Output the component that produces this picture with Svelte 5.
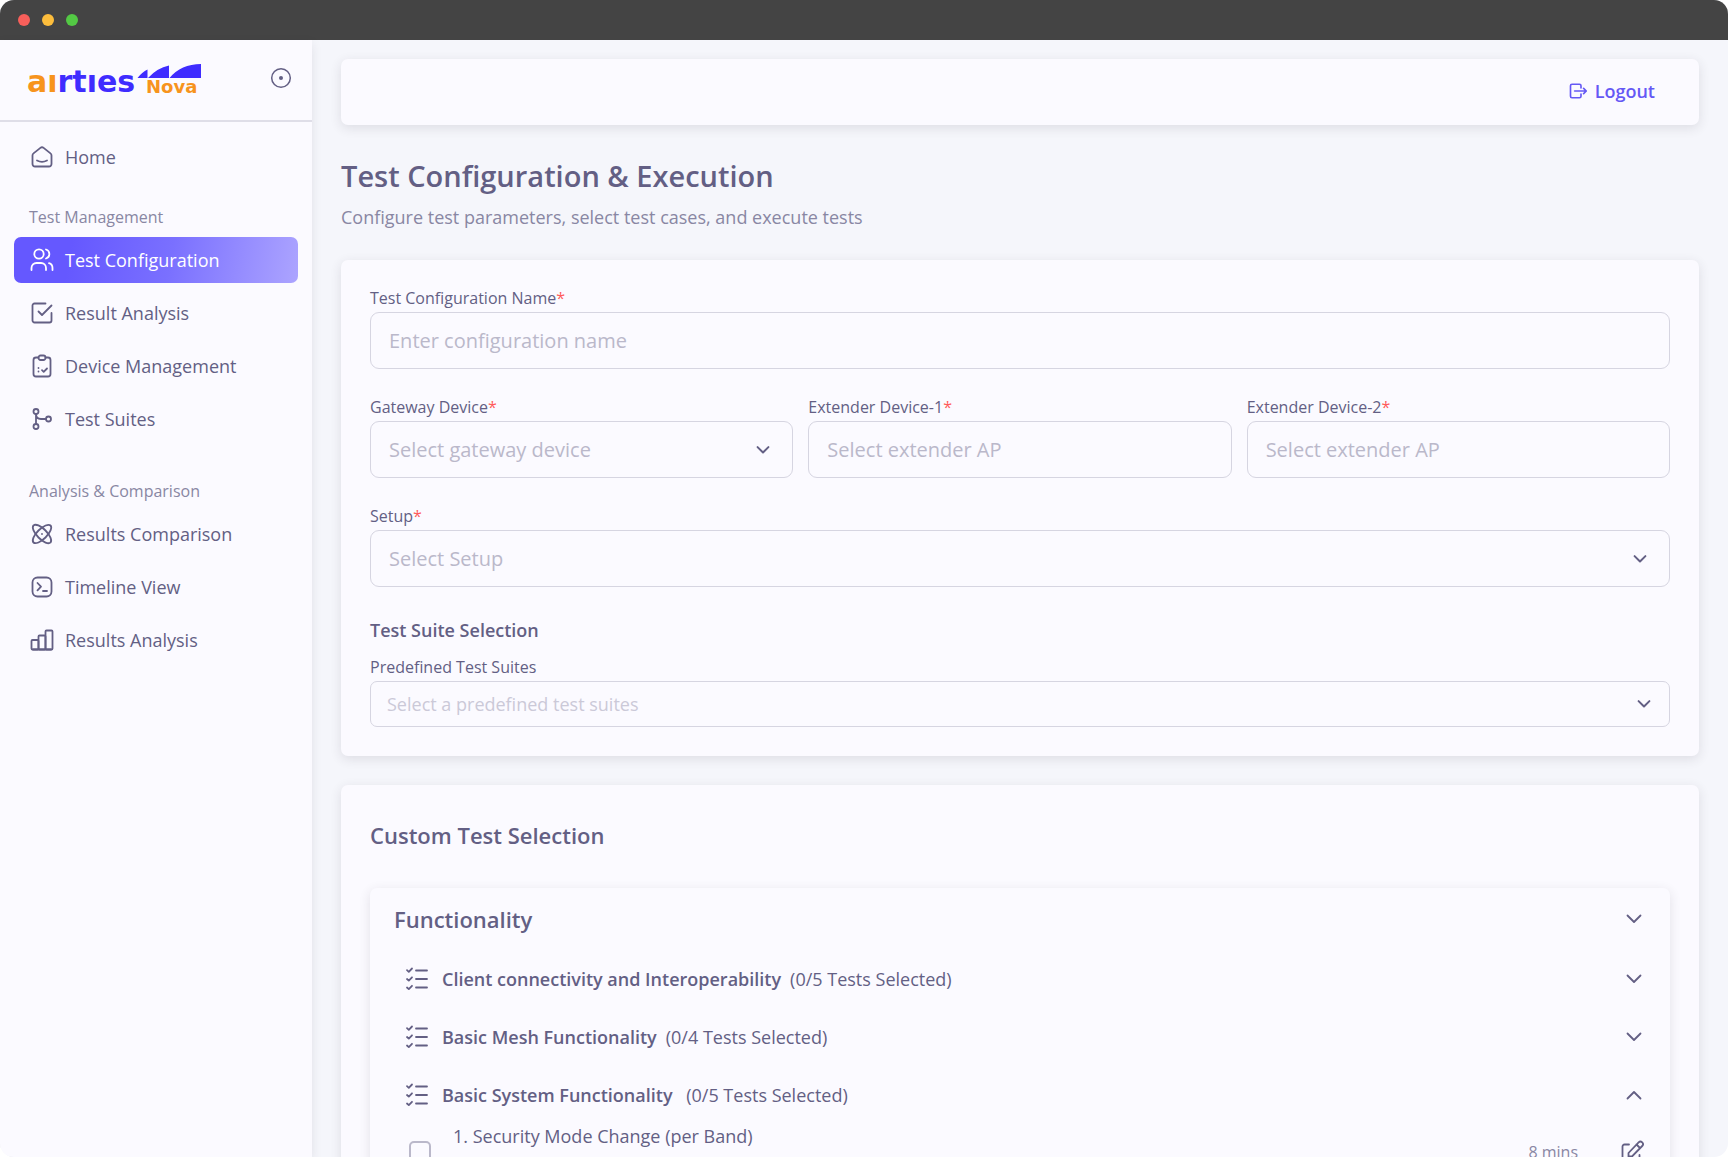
<script lang="ts">
  type Item = { label: string; icon: string; active?: boolean }
  type Group = { title: string; items: Item[] }

  const groups: Group[] = [
    {
      title: 'Test Management',
      items: [
        { label: 'Test Configuration', icon: 'users', active: true },
        { label: 'Result Analysis', icon: 'checkbox' },
        { label: 'Device Management', icon: 'clipboard' },
        { label: 'Test Suites', icon: 'branch' },
      ],
    },
    {
      title: 'Analysis & Comparison',
      items: [
        { label: 'Results Comparison', icon: 'atom' },
        { label: 'Timeline View', icon: 'terminal' },
        { label: 'Results Analysis', icon: 'bars' },
      ],
    },
  ]

  let suites = $state([
    { name: 'Client connectivity and Interoperability', total: 5, open: false, tests: [] },
    { name: 'Basic Mesh Functionality', total: 4, open: false, tests: [] },
    {
      name: 'Basic System Functionality\u00a0',
      total: 5,
      open: true,
      tests: [{ name: 'Security Mode Change (per Band)', time: '8 mins', checked: false }],
    },
  ])

  const selected = (tests: { checked: boolean }[]) =>
    tests.filter((test) => test.checked).length
</script>

{#snippet icon(name: string)}
  <svg class="icon" viewBox="0 0 24 24" aria-hidden="true">
    {#if name === 'home'}
      <path d="M2.500 10.400a2.500 2.500 0 0 1 1-2L10.400 2.900a2.500 2.500 0 0 1 3.200 0L20.500 8.400a2.500 2.500 0 0 1 1 2V19a2.500 2.500 0 0 1-2.500 2.500H5A2.500 2.500 0 0 1 2.500 19z" />
      <path d="M7 15.500c3 1.600 7 1.600 10 0" />
    {:else if name === 'users'}
      <circle cx="9" cy="6" r="4.700" />
      <path d="M1.500 22v-2a5 5 0 0 1 5-5h4.500a5 5 0 0 1 5 5v2M16 1.500a4.700 4.700 0 0 1 0 9M22.500 22v-2a5 5 0 0 0-3.500-4.800" />
    {:else if name === 'checkbox'}
      <path d="M8.500 10.500l3.500 3.500L21.500 4.500" />
      <path d="M21.500 12v7.500a2 2 0 0 1-2 2h-15a2 2 0 0 1-2-2v-15a2 2 0 0 1 2-2H15.500" />
    {:else if name === 'clipboard'}
      <path d="M8.500 3.500h-2.500a2.500 2.500 0 0 0-2.500 2.500v14a2.500 2.500 0 0 0 2.500 2.500h12a2.500 2.500 0 0 0 2.500-2.500v-14a2.500 2.500 0 0 0-2.500-2.500h-2.500" />
      <rect x="8.500" y="1.500" width="7" height="4.500" rx="2" />
      <path d="M8.500 14v.010M8.500 17.500v.010M12 16.200l1.700 1.600 3.300-3.300" />
    {:else if name === 'branch'}
      <circle cx="6" cy="4.500" r="2.500" />
      <circle cx="6" cy="19.500" r="2.500" />
      <circle cx="18.500" cy="12" r="2.500" />
      <path d="M6 7v10M6 7c0 3.500 1.500 5 5 5h5" />
    {:else if name === 'atom'}
      <path d="M12 12v.010M20.500 3.500c-1.900-1.900-7.200.300-12 5s-7 10.100-5 12c1.900 1.900 7.200-.300 12-5s7-10.100 5-12" />
      <path d="M3.500 3.500c-1.900 1.900.300 7.200 5 12s10.100 7 12 5c1.900-1.900-.300-7.200-5-12s-10.100-7-12-5" />
    {:else if name === 'terminal'}
      <rect x="2.500" y="2.500" width="19" height="19" rx="5" />
      <path d="M7.500 8l3.500 3.700-3.500 3.700M13 16h4" />
    {:else if name === 'bars'}
      <rect x="1.500" y="12" width="7" height="9.500" rx="1" />
      <rect x="8.500" y="7.500" width="7" height="14" rx="1" />
      <rect x="15.500" y="2.500" width="7" height="19" rx="1" />
      <path d="M3 21.500h18" />
    {:else if name === 'checklist'}
      <path d="M11 3.500H22M11 12H22M11 20.500H22M2 3.200l1.800 1.600L7 1.500M2 12l1.800 1.600L7 10.300M2 20.500l1.800 1.600L7 18.800" />
    {:else if name === 'edit'}
      <path d="M9 4.500H4.500a2 2 0 0 0-2 2v13a2 2 0 0 0 2 2h13a2 2 0 0 0 2-2V15" />
      <path d="M8.500 16.500h3.500L22.200 6a2.500 2.500 0 0 0-3.600-3.600L8.500 13zM16.500 4.500l3.500 3.500" />
    {:else if name === 'logout'}
      <path d="M16 8V5a2 2 0 0 0-2-2H4a2 2 0 0 0-2 2v14a2 2 0 0 0 2 2H14a2 2 0 0 0 2-2v-3M7.500 12H23M19.500 8.500L23 12l-3.500 3.500" />
    {:else if name === 'down'}
      <path d="M5.500 8.500l6.500 6.500 6.500-6.500" />
    {:else if name === 'up'}
      <path d="M5.500 15.500l6.500-6.500 6.500 6.500" />
    {/if}
  </svg>
{/snippet}

<div class="window">
  <div class="titlebar">
    <span class="dot red"></span>
    <span class="dot yellow"></span>
    <span class="dot green"></span>
  </div>

  <div class="shell">
    <aside>
      <div class="brand">
        <svg class="logo" width="176" height="38" viewBox="0 0 176 38">
          <text class="name" x="-2" y="33"><tspan class="orange">aı</tspan>rtıes</text>
          <text class="nova" x="117" y="34">Nova</text>
          <path d="M108.500 19Q113 13 118.500 10.500V19zM119 19Q128 9 140 6.500V19zM140.500 19Q152 5 172 5V19z" />
        </svg>
        <button class="pin" aria-label="Toggle sidebar">
          <svg viewBox="0 0 22 22">
            <circle cx="11" cy="11" r="9.300" />
            <circle class="core" cx="11" cy="11" r="2" />
          </svg>
        </button>
      </div>

      <nav>
        <a href="#home">{@render icon('home')}Home</a>
        {#each groups as group}
          <h2>{group.title}</h2>
          {#each group.items as item}
            <a href="#{item.icon}" class:active={item.active}>
              {@render icon(item.icon)}{item.label}
            </a>
          {/each}
        {/each}
      </nav>
    </aside>

    <main>
      <header class="card topbar">
        <button class="logout">{@render icon('logout')}Logout</button>
      </header>

      <h1>Test Configuration &amp; Execution</h1>
      <p class="subtitle">Configure test parameters, select test cases, and execute tests</p>

      <form class="card config">
        <div class="field">
          <label for="name">Test Configuration Name<b>*</b></label>
          <input id="name" type="text" placeholder="Enter configuration name" />
        </div>
        <div class="columns">
          <div class="field">
            <label for="gateway">Gateway Device<b>*</b></label>
            <div class="select">
              <select id="gateway"><option>Select gateway device</option></select>
              {@render icon('down')}
            </div>
          </div>
          <div class="field">
            <label for="ext1">Extender Device-1<b>*</b></label>
            <input id="ext1" type="text" placeholder="Select extender AP" />
          </div>
          <div class="field">
            <label for="ext2">Extender Device-2<b>*</b></label>
            <input id="ext2" type="text" placeholder="Select extender AP" />
          </div>
        </div>
        <div class="field">
          <label for="setup">Setup<b>*</b></label>
          <div class="select">
            <select id="setup"><option>Select Setup</option></select>
            {@render icon('down')}
          </div>
        </div>
        <div class="predefined">
          <h3>Test Suite Selection</h3>
          <div class="field small">
            <label for="suite">Predefined Test Suites</label>
            <div class="select">
              <select id="suite"><option>Select a predefined test suites</option></select>
              {@render icon('down')}
            </div>
          </div>
        </div>
      </form>

      <section class="card custom">
        <h2>Custom Test Selection</h2>
        <div class="card panel">
          <button class="row heading">
            <span class="title">Functionality</span>
            {@render icon('down')}
          </button>
          {#each suites as suite}
            <button class="row" onclick={() => (suite.open = !suite.open)}>
              {@render icon('checklist')}
              <strong>{suite.name}</strong>
              <span class="count">({selected(suite.tests)}/{suite.total} Tests Selected)</span>
              {@render icon(suite.open ? 'up' : 'down')}
            </button>
            {#if suite.open}
              {#each suite.tests as test, i}
                <div class="test">
                  <input id="test-{i}" type="checkbox" bind:checked={test.checked} />
                  <label for="test-{i}">{i + 1}. {test.name}</label>
                  <span class="time">{test.time}</span>
                  <button class="edit" aria-label="Edit test">{@render icon('edit')}</button>
                </div>
              {/each}
            {/if}
          {/each}
        </div>
      </section>
    </main>
  </div>
</div>

<style>
  :global(body) {
    margin: 0;
    background: #fff;
  }

  .window {
    --text: #635f84;
    --muted: #8987a3;
    --line: #d6d5e1;
    --paper: #fbfaff;
    display: flex;
    flex-direction: column;
    height: 100vh;
    overflow: hidden;
    border-radius: 14px;
    background: #f5f6fb;
    color: var(--text);
    font: 18px/24px 'Open Sans', sans-serif;
  }

  .window * {
    box-sizing: border-box;
  }

  h1,
  h2,
  h3,
  p {
    margin: 0;
  }

  button {
    padding: 0;
    border: 0;
    background: none;
    color: inherit;
    font: inherit;
    cursor: pointer;
  }

  svg {
    display: block;
    flex: none;
  }

  .icon {
    width: 24px;
    height: 24px;
    fill: none;
    stroke: currentColor;
    stroke-width: 1.8;
    stroke-linecap: round;
    stroke-linejoin: round;
  }

  .titlebar {
    display: flex;
    flex: none;
    align-items: center;
    gap: 12px;
    height: 40px;
    padding-left: 18px;
    background: #444;
  }

  .dot {
    width: 12px;
    height: 12px;
    border-radius: 50%;
  }

  .red {
    background: #f75f5a;
  }

  .yellow {
    background: #fcbd3c;
  }

  .green {
    background: #53c944;
  }

  .shell {
    display: flex;
    flex: 1;
    min-height: 0;
  }

  aside {
    z-index: 1;
    flex: none;
    width: 312px;
    background: var(--paper);
    box-shadow: 0 4px 10px rgba(47, 43, 61, 0.1);
  }

  .brand {
    display: flex;
    align-items: center;
    justify-content: space-between;
    height: 82px;
    padding: 0 20px 4px 29px;
    border-bottom: 2px solid #dfdee8;
  }

  .logo {
    overflow: visible;
    fill: #3f2cff;
    font-family: 'DejaVu Sans', sans-serif;
    font-weight: 700;
  }

  .name {
    font-size: 30px;
  }

  .nova {
    fill: #f7941d;
    font-size: 18px;
  }

  .orange {
    fill: #f7941d;
  }

  .pin svg {
    width: 22px;
    height: 22px;
    fill: none;
    stroke: var(--text);
    stroke-width: 1.5;
  }

  .pin .core {
    fill: var(--text);
    stroke: none;
  }

  nav {
    display: flex;
    flex-direction: column;
    gap: 7px;
    padding: 12px 14px;
  }

  nav a {
    display: flex;
    align-items: center;
    gap: 11px;
    height: 46px;
    padding: 0 16px;
    border-radius: 7px;
    color: inherit;
    text-decoration: none;
  }

  nav a.active {
    background: linear-gradient(100deg, #6558ff 20%, #7a70ff 55%, #aca4ff);
    color: #fff;
  }

  nav h2 {
    margin-top: 29px;
    padding-left: 15px;
    color: var(--muted);
    font-size: 16px;
    font-weight: 400;
    line-height: 26px;
  }

  nav a:first-child + h2 {
    margin-top: 17px;
  }

  main {
    flex: 1;
    min-width: 0;
    padding: 19px 29px;
    overflow-y: auto;
    scrollbar-width: none;
  }

  .card {
    border-radius: 7px;
    background: var(--paper);
    box-shadow: 0 3px 12px rgba(47, 43, 61, 0.12);
  }

  .topbar {
    display: flex;
    align-items: center;
    justify-content: flex-end;
    height: 66px;
    padding: 0 44px 2px 0;
  }

  .logout {
    display: flex;
    align-items: center;
    gap: 8px;
    color: #6558f5;
    font-weight: 600;
  }

  .logout .icon {
    width: 18px;
    height: 18px;
    stroke-width: 2.2;
  }

  h1 {
    margin-top: 31px;
    font-size: 29px;
    font-weight: 600;
    line-height: 40px;
  }

  .subtitle {
    margin: 9px 0 31px;
    color: var(--muted);
  }

  .config {
    display: flex;
    flex-direction: column;
    gap: 28px;
    padding: 28px 29px 29px;
  }

  .columns {
    display: grid;
    grid-template-columns: repeat(3, 1fr);
    gap: 15px;
  }

  .field label {
    display: block;
    margin-bottom: 4px;
    font-size: 16px;
    line-height: 20px;
  }

  .field b {
    color: #ff5a5a;
    font-weight: 400;
  }

  .field input,
  select {
    display: block;
    width: 100%;
    height: 57px;
    padding: 0 18px;
    border: 1px solid var(--line);
    border-radius: 9px;
    background: none;
    color: #bab8ca;
    font: 20px 'Open Sans', sans-serif;
    appearance: none;
  }

  .field input::placeholder {
    color: #bab8ca;
    opacity: 1;
  }

  .select {
    position: relative;
  }

  .select .icon {
    position: absolute;
    top: 50%;
    right: 20px;
    width: 20px;
    height: 20px;
    margin-top: -10px;
    stroke-width: 2.4;
    pointer-events: none;
  }

  .small select {
    height: 46px;
    padding: 0 16px;
    border-radius: 7px;
    color: #cbc9d8;
    font-size: 18px;
  }

  .small .select .icon {
    right: 16px;
  }

  h3 {
    margin: 3px 0 15px;
    font-size: 18px;
    font-weight: 600;
  }

  .custom {
    margin-top: 29px;
    padding: 34px 29px;
  }

  .custom h2 {
    margin-bottom: 37px;
    font-size: 22px;
    font-weight: 600;
    line-height: 32px;
  }

  .panel {
    padding: 2px 24px 24px;
  }

  .row {
    display: flex;
    align-items: center;
    width: 100%;
    height: 58px;
    padding-left: 11px;
    text-align: left;
  }

  .heading {
    margin-bottom: 2px;
    padding-left: 0;
  }

  .heading .title {
    font-size: 22px;
    font-weight: 600;
  }

  .row .icon:last-child {
    margin-left: auto;
  }

  .row strong {
    margin: 0 9px 0 13px;
    font-weight: 600;
  }

  .test {
    display: flex;
    align-items: center;
    height: 56px;
    padding: 0 2px 0 15px;
  }

  .test input {
    width: 22px;
    height: 22px;
    margin: 0;
    border: 2px solid #bab8ca;
    border-radius: 5px;
    appearance: none;
  }

  .test input:checked {
    background: #6558ff;
  }

  .test label {
    align-self: flex-start;
    margin-left: 22px;
  }

  .time {
    margin: 0 42px 0 auto;
    color: var(--muted);
    font-size: 16px;
  }
</style>
